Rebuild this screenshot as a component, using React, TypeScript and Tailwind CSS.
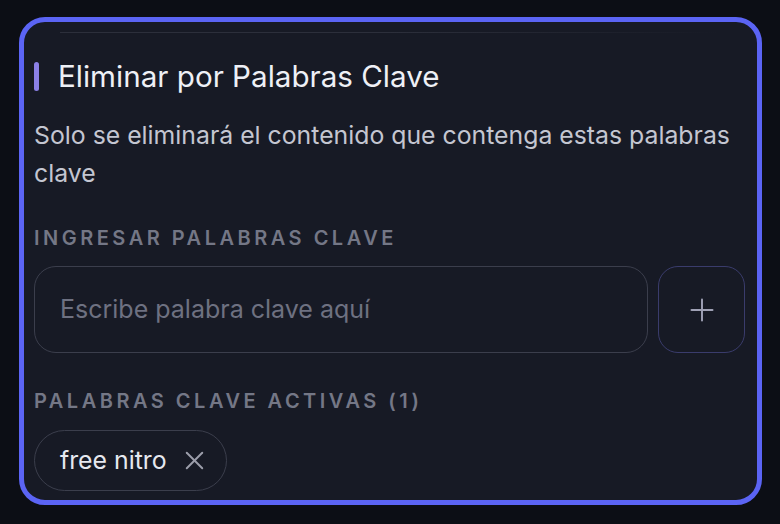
import { Plus, X } from 'lucide-react';

const keywords = ['free nitro'];

export default function App() {
  return (
    <div className="min-h-screen bg-[#0c0e15] px-[19px] pt-[17px] font-['Inter',sans-serif]">
      <div className="w-[743px] rounded-[26px] border-[5px] border-[#5b64f4] bg-[#171a25] pb-[9px] pl-[10px] pr-[12px]">
        {/* top divider */}
        <div className="mx-[26px] mt-[10px] h-px bg-gradient-to-r from-[#2c2f3b] via-[#2c2f3b] to-transparent" />

        {/* header */}
        <div className="mt-[29px] flex items-center gap-[19px]">
          <span className="h-[29px] w-[5px] rounded-full bg-[#8b80e6]" />
          <h3 className="text-[29.6px] leading-[29px] text-[#eef0f6]">Eliminar por Palabras Clave</h3>
        </div>

        <p className="mt-[25px] text-[24.8px] leading-[38px] text-[#c4c6d1]">
          Solo se eliminará el contenido que contenga estas palabras clave
        </p>

        {/* input */}
        <h4 className="mt-[35px] text-[20px] font-semibold uppercase leading-[22px] tracking-[3.5px] text-[#747786]">
          Ingresar palabras clave
        </h4>
        <div className="mt-[17px] flex h-[87px] gap-[10px]">
          <input
            type="text"
            placeholder="Escribe palabra clave aquí"
            className="min-w-0 flex-1 rounded-[22px] border-[1.5px] border-[#3b3e4c] bg-transparent px-[25px] text-[25px] text-[#e6e8ef] outline-none placeholder:text-[#6e7181]"
          />
          <button className="flex w-[87px] items-center justify-center rounded-[20px] border-[1.5px] border-[#3a3c6c] text-[#9fa1b5]">
            <Plus className="h-[36px] w-[36px]" strokeWidth={1.3} />
          </button>
        </div>

        {/* active keywords */}
        <h4 className="mt-[37px] text-[20px] font-semibold uppercase leading-[22px] tracking-[3.5px] text-[#747786]">
          Palabras clave activas ({keywords.length})
        </h4>
        <div className="mt-[18px] flex flex-wrap gap-2">
          {keywords.map((kw) => (
            <div
              key={kw}
              className="flex h-[61px] items-center gap-[12px] rounded-full border-[1.5px] border-[#3b3e4c] pl-[25px] pr-[16px]"
            >
              <span className="text-[24.8px] text-[#e6e8ef]">{kw}</span>
              <button className="text-[#9c9eab]">
                <X className="h-[31px] w-[31px]" strokeWidth={1.5} />
              </button>
            </div>
          ))}
        </div>
      </div>
    </div>
  );
}
